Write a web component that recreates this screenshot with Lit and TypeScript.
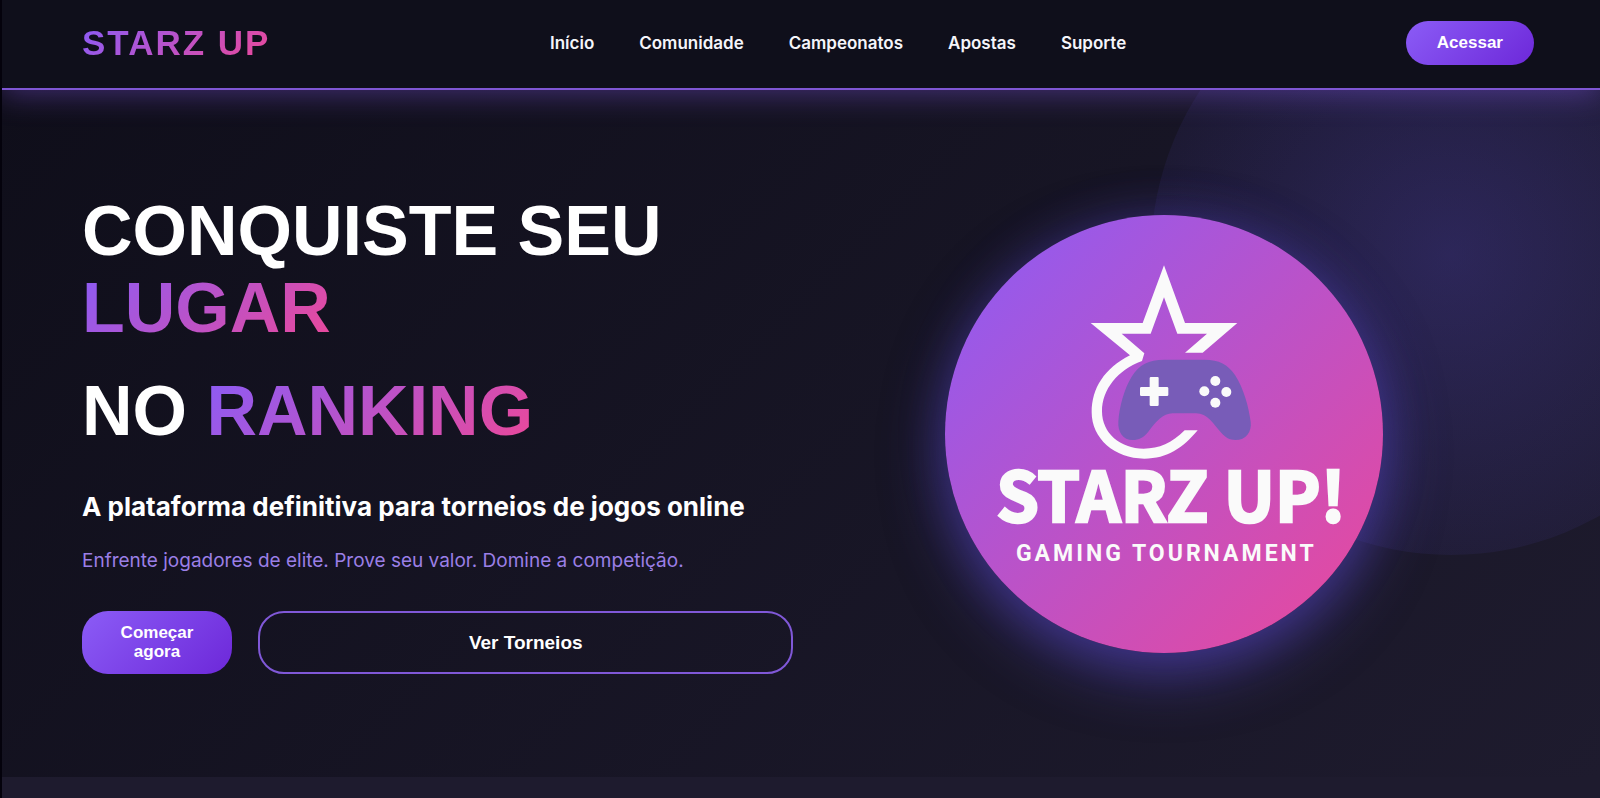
import { LitElement, html, css } from "lit";
import { customElement } from "lit/decorators.js";

@customElement("starz-emblem")
class StarzEmblem extends LitElement {
  static styles = css`
    :host {
      display: block;
      width: 438px;
      max-width: 100%;
      border-radius: 50%;
      background: linear-gradient(135deg, #8b5cf6, #ec4899);
      box-shadow: 0 20px 60px rgba(99, 82, 230, 0.5), 0 0 50px rgba(79, 60, 200, 0.2);
    }
    .art {
      display: block;
      width: 100%;
      height: auto;
    }
    .ink {
      fill: #fafafa;
    }
    .pad {
      fill: #785cb8;
    }
    .title {
      fill: #fafafa;
      stroke: #fafafa;
      stroke-width: 8px;
      font: 700 205px "Noto Sans CJK SC", sans-serif;
      text-anchor: middle;
    }
    .tagline {
      fill: #fafafa;
      font: 700 69px Roboto, sans-serif;
      letter-spacing: 9px;
      text-anchor: middle;
    }
  `;

  render() {
    return html`
      <svg class="art" viewBox="0 0 1314 1314" role="img" aria-label="Starz Up! Gaming Tournament">
        <g transform="translate(348 105)">
          <path
            class="ink"
            d="M309 46 L372 219 H529 L425 308 H372 L438 251 H349 L309 142 L269 251 H182 L250 310 L243 333 C170 360 123 418 123 484 C123 550 178 596 248 596 C295 596 332 580 371 541 H410 C365 594 320 626 250 626 C160 626 92 565 92 487 C92 415 130 355 207 316 L89 219 H245 Z"
          />
          <path
            class="pad"
            d="M310 329 H430 C475 329 500 343 522 375 C548 415 563 470 569 515 C573 545 555 570 523 570 C505 570 494 563 482 550 C455 520 440 490 405 490 H335 C305 490 285 515 262 545 C248 562 234 570 215 570 C186 570 170 545 172 515 C175 470 190 415 212 380 C235 343 262 329 310 329 Z"
          />
          <path
            class="ink"
            d="M270 381 H290 Q293 381 293 384 V411 H318 Q322 411 322 415 V434 Q322 438 318 438 H293 V464 Q293 468 289 468 H270 Q266 468 266 464 V438 H241 Q237 438 237 434 V415 Q237 411 241 411 H266 V385 Q266 381 270 381 Z"
          />
          <circle class="ink" cx="463" cy="393" r="15" />
          <circle class="ink" cx="430" cy="424" r="15" />
          <circle class="ink" cx="496" cy="426" r="15" />
          <circle class="ink" cx="463" cy="458" r="15" />
        </g>
        <text class="title" x="678" y="922">STARZ UP!</text>
        <text class="tagline" x="664" y="1038">GAMING TOURNAMENT</text>
      </svg>
    `;
  }
}

@customElement("app-root")
class AppRoot extends LitElement {
  static styles = css`
    :host {
      display: flex;
      flex-direction: column;
      box-sizing: border-box;
      min-height: 100vh;
      border-left: 2px solid #04020c;
      background: #1e1b2e;
      color: #fff;
      font-family: Inter, sans-serif;
      overflow: hidden;
    }
    .header {
      position: relative;
      z-index: 2;
      display: flex;
      align-items: center;
      justify-content: space-between;
      padding: 21px 66px 23px 80px;
      border-bottom: 2px solid #7f56d4;
      background: #0f0f1b;
      box-shadow: 0 4px 30px rgba(139, 92, 246, 0.4);
    }
    .brand {
      font: 700 35px/40px "Liberation Sans", Arial, sans-serif;
      letter-spacing: 2px;
      text-decoration: none;
    }
    .brand,
    .accent {
      background: linear-gradient(135deg, #8b5cf6, #ec4899);
      -webkit-background-clip: text;
      background-clip: text;
      color: transparent;
    }
    .nav {
      display: flex;
      gap: 45px;
    }
    .link {
      color: #f5f5fa;
      font-size: 17px;
      font-weight: 600;
      line-height: 24px;
      text-decoration: none;
    }
    .button {
      border: 0;
      border-radius: 26px;
      color: #fff;
      font: 700 17px/19px "Liberation Sans", Arial, sans-serif;
      cursor: pointer;
    }
    .primary {
      padding: 12px 31px 13px;
      background: linear-gradient(135deg, #8b5cf6, #6d28d9);
    }
    .outline {
      flex: 1;
      border: 2px solid #8058d8;
      background: transparent;
      font-size: 19px;
    }
    .hero {
      position: relative;
      display: grid;
      grid-template-columns: 49fr 51fr;
      align-items: center;
      padding: 103px 66px 103px 80px;
      background: linear-gradient(135deg, #0f0e1a, #1e1b2e);
      overflow: hidden;
    }
    .halo {
      position: absolute;
      top: -135px;
      right: -151px;
      width: 600px;
      height: 600px;
      border-radius: 50%;
      background: radial-gradient(circle, rgba(99, 82, 230, 0.26), rgba(99, 82, 230, 0));
    }
    .headline {
      margin: 0 0 37px;
      font: 700 70px/77px "Liberation Sans", Arial, sans-serif;
    }
    .line {
      display: block;
    }
    .line + .line {
      margin-top: 26px;
    }
    .lead {
      margin: 0 0 18px;
      font-size: 26px;
      font-weight: 700;
      line-height: 40px;
    }
    .note {
      margin: 0 0 34px;
      color: #9b7fe6;
      font-size: 19px;
      line-height: 32px;
    }
    .actions {
      display: flex;
      gap: 26px;
      min-height: 63px;
    }
    .start {
      flex: 0 0 150px;
    }
    .visual {
      position: relative;
      display: flex;
      justify-content: center;
    }
    .next {
      flex: 1;
      background: #1e1b2e;
    }
  `;

  private links = ["Início", "Comunidade", "Campeonatos", "Apostas", "Suporte"];

  render() {
    return html`
      <header class="header">
        <a class="brand" href="#">STARZ UP</a>
        <nav class="nav">
          ${this.links.map((label) => html`<a class="link" href="#">${label}</a>`)}
        </nav>
        <button class="button primary" type="button">Acessar</button>
      </header>
      <main class="hero">
        <div class="halo"></div>
        <div class="copy">
          <h1 class="headline">
            <span class="line">CONQUISTE SEU <span class="accent">LUGAR</span></span>
            <span class="line">NO <span class="accent">RANKING</span></span>
          </h1>
          <p class="lead">A plataforma definitiva para torneios de jogos online</p>
          <p class="note">Enfrente jogadores de elite. Prove seu valor. Domine a competição.</p>
          <div class="actions">
            <button class="button primary start" type="button">Começar agora</button>
            <button class="button outline" type="button">Ver Torneios</button>
          </div>
        </div>
        <div class="visual"><starz-emblem></starz-emblem></div>
      </main>
      <section class="next"></section>
    `;
  }
}
